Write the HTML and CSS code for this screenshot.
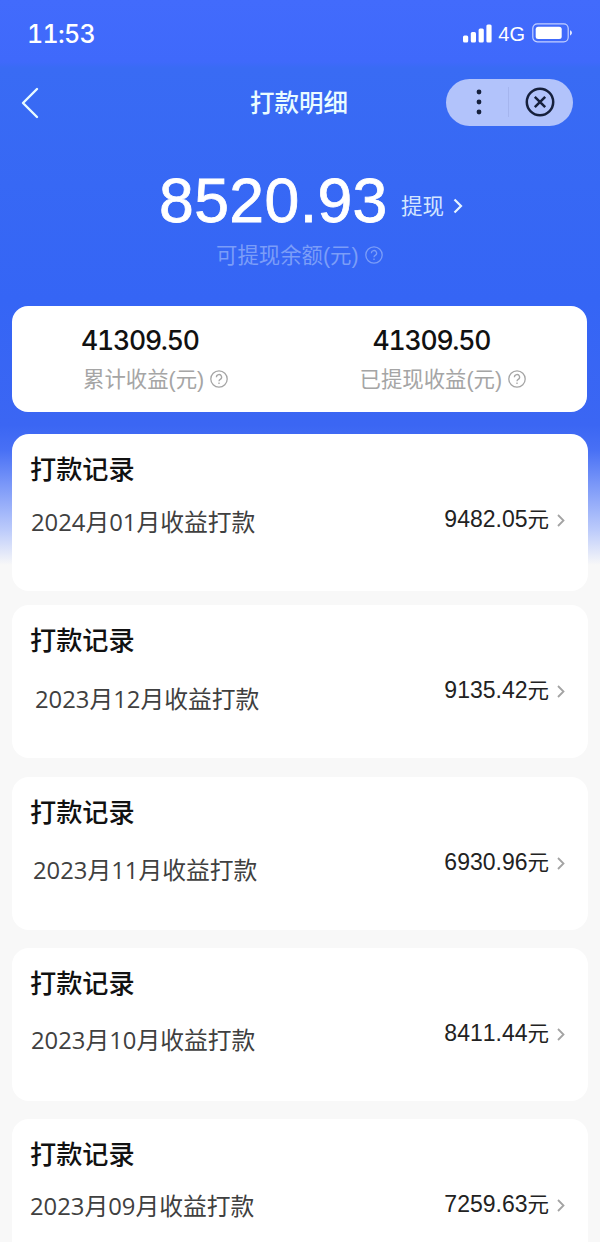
FILE: index.html
```html
<!DOCTYPE html>
<html lang="zh-CN">
<head>
  <meta charset="UTF-8">
  <meta name="viewport" content="width=device-width, initial-scale=1.0">
  <title>打款明细</title>
  <link rel="stylesheet" href="styles.css">
</head>
<body>

  <!-- Status bar -->
  <div class="status-bar">
    <span class="time">11:53</span>
    <div class="status-icons">
      <svg class="signal" width="29" height="19" viewBox="0 0 29 19" fill="#fff">
        <rect x="0" y="11.5" width="5.2" height="7" rx="1.5"/>
        <rect x="7.8" y="8" width="5.2" height="10.5" rx="1.5"/>
        <rect x="15.6" y="4.5" width="5.2" height="14" rx="1.5"/>
        <rect x="23.4" y="0.5" width="5.2" height="18" rx="1.5"/>
      </svg>
      <span class="network">4G</span>
      <svg class="battery" width="41" height="20" viewBox="0 0 41 20">
        <rect x="0.8" y="0.8" width="35.4" height="18" rx="4.5" fill="none" stroke="#c3d0ff" stroke-width="1.2"/>
        <rect x="3.7" y="3.7" width="26" height="12.4" rx="2.5" fill="#fff"/>
        <path d="M38 7.2c2.6 1 2.6 4.2 0 5.2z" fill="#dfe6ff"/>
      </svg>
    </div>
  </div>

  <!-- Nav bar -->
  <div class="nav-bar">
    <svg class="back" width="18" height="32" viewBox="0 0 18 32" fill="none" stroke="#e9fbff" stroke-width="2.4" stroke-linecap="round" stroke-linejoin="round">
      <path d="M16 2L2 16l14 14"/>
    </svg>
    <h1>打款明细</h1>
    <div class="capsule">
      <svg class="dots" width="6" height="26" viewBox="0 0 6 26" fill="#16203c">
        <circle cx="3" cy="3" r="2.4"/>
        <circle cx="3" cy="13" r="2.4"/>
        <circle cx="3" cy="23" r="2.4"/>
      </svg>
      <span class="divider"></span>
      <svg class="close" width="30" height="30" viewBox="0 0 30 30" fill="none" stroke="#16203c" stroke-width="2.5">
        <circle cx="15" cy="15" r="13.2"/>
        <path d="M9.8 9.8l10.4 10.4M20.2 9.8L9.8 20.2"/>
      </svg>
    </div>
  </div>

  <!-- Balance -->
  <div class="balance">
    <div class="balance-row">
      <span class="balance-number">8520.93</span>
      <span class="withdraw">提现</span>
      <svg class="withdraw-arrow" width="10" height="16" viewBox="0 0 10 16" fill="none" stroke="#e6f4ff" stroke-width="2.2">
        <path d="M1.5 1.5L8 8l-6.5 6.5"/>
      </svg>
    </div>
    <div class="balance-label">
      可提现余额(元)
      <svg class="help" width="18" height="18" viewBox="0 0 18 18" fill="none" stroke="currentColor" stroke-width="1.3">
        <circle cx="9" cy="9" r="8.2"/>
        <path d="M6.4 7.2a2.6 2.6 0 1 1 3.9 2.2c-.9.5-1.3.9-1.3 1.9M9 12.4v1.5"/>
      </svg>
    </div>
  </div>

  <!-- Totals -->
  <div class="totals">
    <div class="total">
      <div class="total-number">41309.50</div>
      <div class="total-label">
        累计收益(元)
        <svg class="help" width="18" height="18" viewBox="0 0 18 18" fill="none" stroke="currentColor" stroke-width="1.3">
          <circle cx="9" cy="9" r="8.2"/>
          <path d="M6.4 7.2a2.6 2.6 0 1 1 3.9 2.2c-.9.5-1.3.9-1.3 1.9M9 12.4v1.5"/>
        </svg>
      </div>
    </div>
    <div class="total total-paid">
      <div class="total-number">41309.50</div>
      <div class="total-label">
        已提现收益(元)
        <svg class="help" width="18" height="18" viewBox="0 0 18 18" fill="none" stroke="currentColor" stroke-width="1.3">
          <circle cx="9" cy="9" r="8.2"/>
          <path d="M6.4 7.2a2.6 2.6 0 1 1 3.9 2.2c-.9.5-1.3.9-1.3 1.9M9 12.4v1.5"/>
        </svg>
      </div>
    </div>
  </div>

  <!-- Records -->
  <div class="records">
    <div class="record record-jan">
      <h2>打款记录</h2>
      <div class="record-row">
        <span class="record-name">2024月01月收益打款</span>
        <span class="amount">9482.05<span class="unit">元</span></span>
        <svg class="arrow" width="8" height="13" viewBox="0 0 8 13" fill="none" stroke="#a3a3a3" stroke-width="1.8"><path d="M1 1l5.5 5.5L1 12"/></svg>
      </div>
    </div>
    <div class="record record-dec">
      <h2>打款记录</h2>
      <div class="record-row">
        <span class="record-name">2023月12月收益打款</span>
        <span class="amount">9135.42<span class="unit">元</span></span>
        <svg class="arrow" width="8" height="13" viewBox="0 0 8 13" fill="none" stroke="#a3a3a3" stroke-width="1.8"><path d="M1 1l5.5 5.5L1 12"/></svg>
      </div>
    </div>
    <div class="record record-nov">
      <h2>打款记录</h2>
      <div class="record-row">
        <span class="record-name">2023月11月收益打款</span>
        <span class="amount">6930.96<span class="unit">元</span></span>
        <svg class="arrow" width="8" height="13" viewBox="0 0 8 13" fill="none" stroke="#a3a3a3" stroke-width="1.8"><path d="M1 1l5.5 5.5L1 12"/></svg>
      </div>
    </div>
    <div class="record record-oct">
      <h2>打款记录</h2>
      <div class="record-row">
        <span class="record-name">2023月10月收益打款</span>
        <span class="amount">8411.44<span class="unit">元</span></span>
        <svg class="arrow" width="8" height="13" viewBox="0 0 8 13" fill="none" stroke="#a3a3a3" stroke-width="1.8"><path d="M1 1l5.5 5.5L1 12"/></svg>
      </div>
    </div>
    <div class="record record-sep">
      <h2>打款记录</h2>
      <div class="record-row">
        <span class="record-name">2023月09月收益打款</span>
        <span class="amount">7259.63<span class="unit">元</span></span>
        <svg class="arrow" width="8" height="13" viewBox="0 0 8 13" fill="none" stroke="#a3a3a3" stroke-width="1.8"><path d="M1 1l5.5 5.5L1 12"/></svg>
      </div>
    </div>
  </div>

</body>
</html>
```
FILE: styles.css
```css
* {
  box-sizing: border-box;
}
body {
  margin: 0;
  height: 1242px;
  overflow: hidden;
  font-family: "Liberation Sans", "Noto Sans CJK SC", sans-serif;
  font-kerning: none;
  background: #f8f8f8 linear-gradient(to bottom, #426bfc 0, #3f69fb 62px, #396bf4 68px, #3565f5 300px, #3b66f3 425px, #4870f5 450px, #7b98f8 485px, #bccbfb 530px, #f8f8f8 565px) no-repeat;
  background-size: 100% 1242px;
}
svg {
  display: block;
  flex: none;
}
/* Status bar */
.status-bar {
  display: flex;
  justify-content: space-between;
  align-items: center;
  height: 66px;
  padding: 0 27px 0 27px;
  color: #fff;
}
.time {
  padding-top: 2px;
  font: 500 25px/30px Inter, sans-serif;
  font-variant-numeric: tabular-nums;
  letter-spacing: -0.7px;
}
.status-icons {
  display: flex;
  align-items: center;
}
.network {
  margin: 0 7px 0 6px;
  padding-top: 2px;
  font-size: 20px;
  line-height: 24px;
}
/* Nav bar */
.nav-bar {
  display: grid;
  grid-template-columns: 1fr auto 1fr;
  align-items: center;
  height: 72px;
  padding: 0 27px 0 21px;
}
h1 {
  margin: 0;
  padding: 3px 0 0 4px;
  font-size: 24.5px;
  font-weight: 500;
  line-height: 36px;
  color: #eafcff;
}
.back {
  margin-top: 2px;
}
.capsule {
  justify-self: end;
  display: flex;
  align-items: center;
  width: 127px;
  height: 47px;
  padding: 0 17px 0 30px;
  border-radius: 24px;
  background: #b2c3fb;
}
.divider {
  width: 1px;
  height: 30px;
  margin: 0 16px 0 26px;
  background: #a5b5ee;
}
/* Balance */
.balance {
  height: 168px;
  padding-top: 27px;
}
.balance-row {
  display: flex;
  align-items: center;
  height: 72px;
  padding-left: 159px;
}
.balance-number {
  width: 242px;
  margin-top: -2px;
  font-size: 62.5px;
  line-height: 72px;
  letter-spacing: 0.4px;
  -webkit-text-stroke: 0.8px #fff;
  color: #fff;
}
.withdraw {
  margin: 12px 9px 0 0;
  font-size: 21.5px;
  line-height: 32px;
  color: #d4e5ff;
}
.withdraw-arrow {
  margin-top: 9px;
}
.balance-label,
.total-label {
  display: flex;
  align-items: center;
  gap: 6px;
  font-size: 21.4px;
  line-height: 30px;
}
.balance-label {
  padding: 4px 0 0 216px;
  color: #7b9df8;
}
.help {
  margin-top: -2px;
}
/* Totals */
.totals {
  display: grid;
  grid-template-columns: 1fr 1fr;
  width: 575px;
  height: 106px;
  margin: 0 0 22px 12px;
  padding-top: 18px;
  border-radius: 16px;
  background: #fff;
}
.total {
  padding-left: 69px;
}
.total-number {
  font: 450 26.5px/32px Inter, sans-serif;
  font-variant-numeric: tabular-nums;
  letter-spacing: -1.2px;
  color: #111;
}
.total-label {
  margin-top: 9px;
  padding-left: 2px;
  color: #a5a5a5;
}
.total-paid {
  padding-left: 60px;
}
.total-paid .total-number {
  padding-left: 13px;
}
.total-paid .total-label {
  padding-left: 0;
}
/* Payment records */
.records {
  padding: 0 12px;
}
.record {
  height: 153px;
  margin-bottom: 18px;
  padding: 19px 22px 0 18px;
  border-radius: 17px;
  background: #fff;
}
h2 {
  margin: 0;
  font-size: 26.2px;
  font-weight: 500;
  line-height: 34px;
  color: #111;
}
.record-row {
  display: flex;
  align-items: flex-start;
  margin-top: 16px;
}
.record-name {
  flex: 1;
  font-family: "Open Sans", "Noto Sans CJK SC", sans-serif;
  font-size: 23.8px;
  line-height: 32px;
  color: #404040;
}
.amount {
  font-size: 23px;
  line-height: 32px;
  color: #222;
}
.unit {
  font-size: 21.5px;
}
.arrow {
  margin: 11px 1px 0 8px;
}
/* Each month's caption sits at its own offset */
.record-jan {
  height: 157px;
  margin-bottom: 14px;
}
.record-jan .record-name {
  padding: 3px 0 0 1px;
}
.record-dec {
  margin-bottom: 19px;
}
.record-dec .record-name {
  padding: 9px 0 0 5px;
}
.record-nov .record-name {
  padding: 8px 0 0 3px;
}
.record-oct .record-name {
  padding: 7px 0 0 1px;
}
.record-sep .record-name {
  padding: 2px 0 0 0;
}
```
